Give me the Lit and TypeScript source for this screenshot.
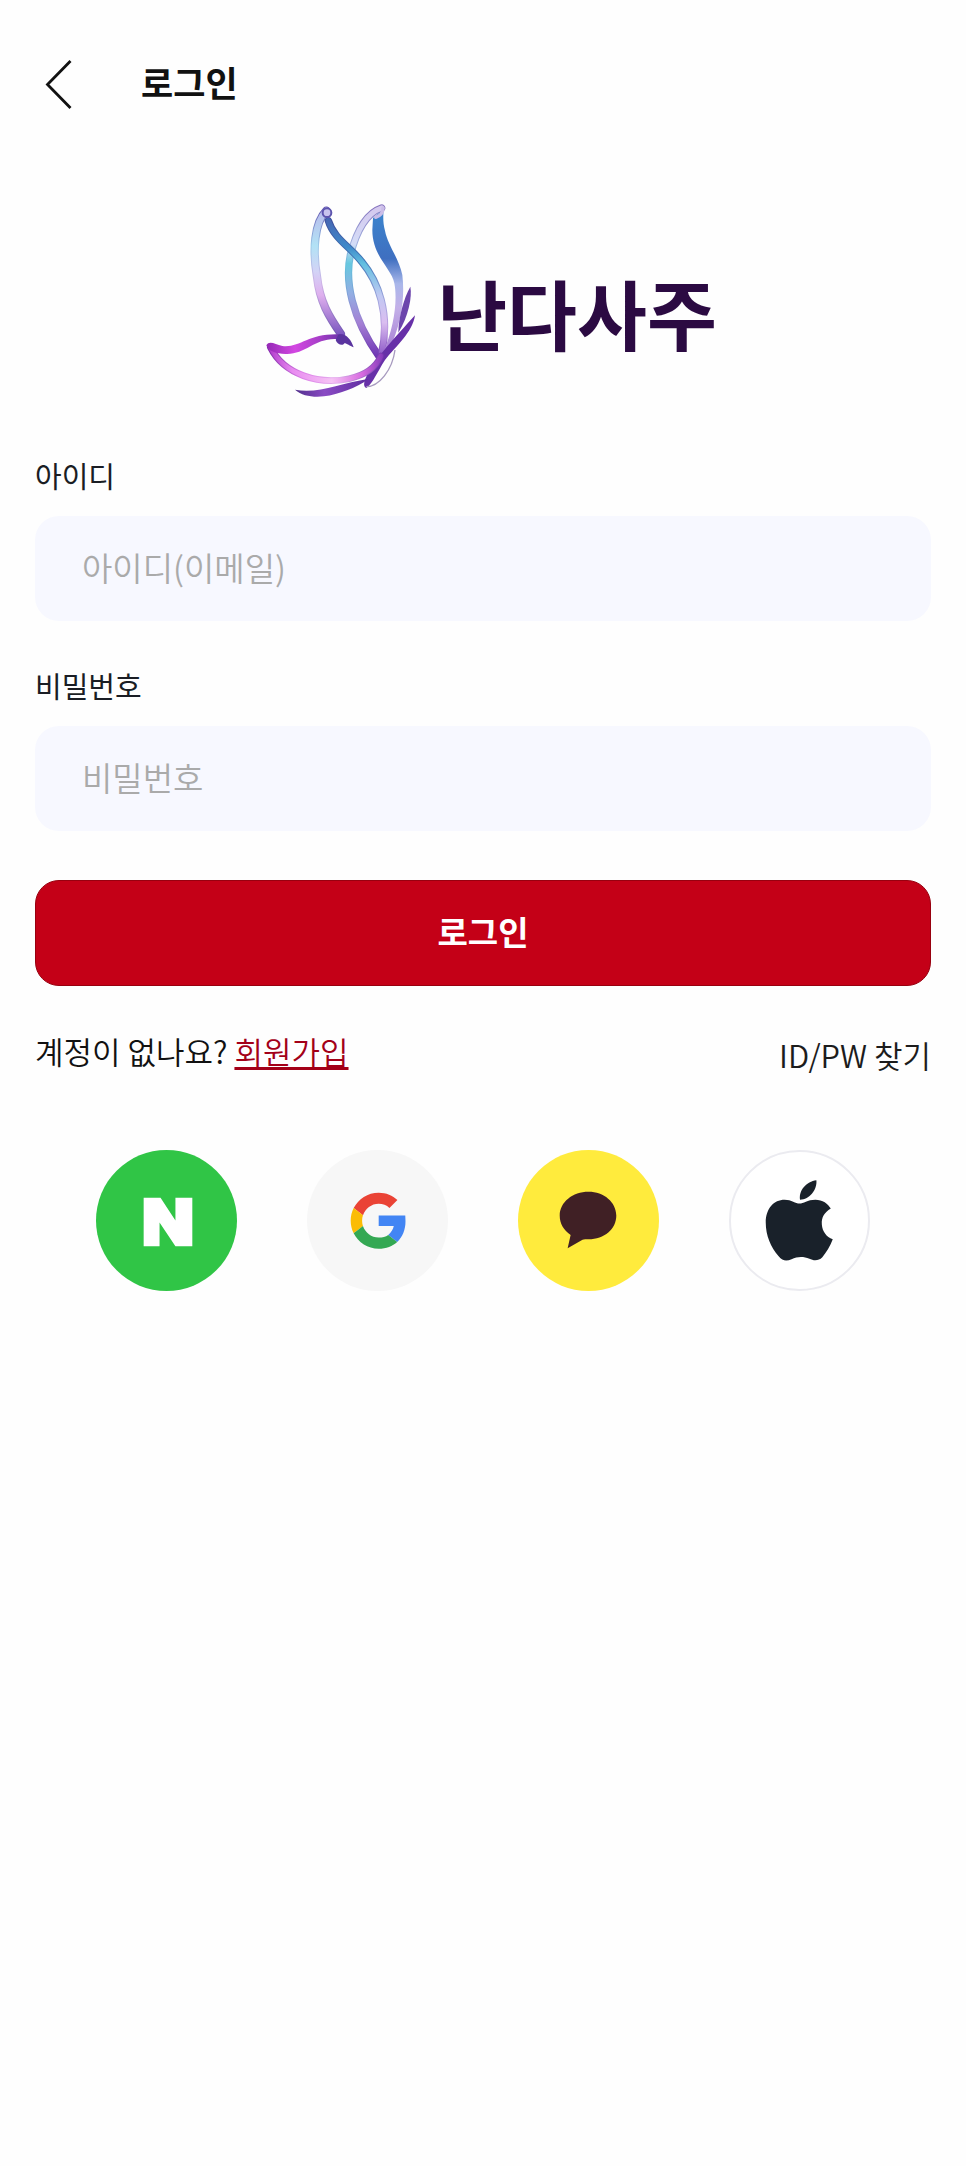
import { LitElement, html, css, svg } from "lit";
import { customElement } from "lit/decorators.js";

/* One ribbon of the butterfly: a darker edge with a lighter core on top. */
const ribbon = (d: string, paint: string, edge: string, width: number) => svg`
  <path d=${d} fill="none" stroke="url(#${edge})" stroke-width=${width} stroke-linecap="round"></path>
  <path d=${d} fill="none" stroke="url(#${paint})" stroke-width=${width - 6} stroke-linecap="round"></path>
`;

@customElement("brand-logo")
export class BrandLogo extends LitElement {
  static styles = css`
    :host {
      display: flex;
      justify-content: center;
      align-items: center;
      gap: 8px;
    }
    .mark {
      width: 180px;
      height: 220px;
      flex: none;
    }
    .name {
      padding-top: 24px;
      font-size: 76px;
      line-height: 88px;
      font-weight: 700;
      color: #2b0a42;
      white-space: nowrap;
    }
  `;

  render() {
    return html`
      <svg class="mark" viewBox="0 0 540 660" aria-hidden="true">
        <defs>
          <linearGradient id="wing" gradientUnits="userSpaceOnUse" x1="0" y1="50" x2="0" y2="440">
            <stop offset="0" stop-color="#b9b6ea"></stop>
            <stop offset="0.3" stop-color="#b2e2f5"></stop>
            <stop offset="0.5" stop-color="#d3d3f6"></stop>
            <stop offset="0.68" stop-color="#dfb0ee"></stop>
            <stop offset="1" stop-color="#7651bd"></stop>
          </linearGradient>
          <linearGradient id="wingEdge" gradientUnits="userSpaceOnUse" x1="0" y1="50" x2="0" y2="440">
            <stop offset="0" stop-color="#5f4fae"></stop>
            <stop offset="0.3" stop-color="#9ccbe9"></stop>
            <stop offset="0.6" stop-color="#cfb1e6"></stop>
            <stop offset="1" stop-color="#6a50ae"></stop>
          </linearGradient>
          <linearGradient id="vein" gradientUnits="userSpaceOnUse" x1="0" y1="90" x2="0" y2="500">
            <stop offset="0" stop-color="#4668b4"></stop>
            <stop offset="0.2" stop-color="#3f8bca"></stop>
            <stop offset="0.32" stop-color="#62bfe0"></stop>
            <stop offset="0.55" stop-color="#c0c9f2"></stop>
            <stop offset="0.75" stop-color="#dabdf0"></stop>
            <stop offset="1" stop-color="#8a55c6"></stop>
          </linearGradient>
          <linearGradient id="veinEdge" gradientUnits="userSpaceOnUse" x1="0" y1="90" x2="0" y2="500">
            <stop offset="0" stop-color="#3c4f9b"></stop>
            <stop offset="0.3" stop-color="#3f78b8"></stop>
            <stop offset="0.6" stop-color="#a3a6de"></stop>
            <stop offset="0.8" stop-color="#bd9ae0"></stop>
            <stop offset="1" stop-color="#6d3ab0"></stop>
          </linearGradient>
          <linearGradient id="inner" gradientUnits="userSpaceOnUse" x1="0" y1="50" x2="0" y2="500">
            <stop offset="0" stop-color="#d5c8ee"></stop>
            <stop offset="0.25" stop-color="#d3dcf7"></stop>
            <stop offset="0.38" stop-color="#66c8df"></stop>
            <stop offset="0.58" stop-color="#93aee3"></stop>
            <stop offset="0.78" stop-color="#a47fd4"></stop>
            <stop offset="1" stop-color="#6f35b4"></stop>
          </linearGradient>
          <linearGradient id="innerEdge" gradientUnits="userSpaceOnUse" x1="0" y1="50" x2="0" y2="500">
            <stop offset="0" stop-color="#8573bd"></stop>
            <stop offset="0.25" stop-color="#9fb0df"></stop>
            <stop offset="0.4" stop-color="#62bfdc"></stop>
            <stop offset="0.75" stop-color="#9a86d2"></stop>
            <stop offset="1" stop-color="#6830aa"></stop>
          </linearGradient>
          <linearGradient id="right" gradientUnits="userSpaceOnUse" x1="0" y1="80" x2="0" y2="500">
            <stop offset="0" stop-color="#3b82cc"></stop>
            <stop offset="0.3" stop-color="#3f6fc0"></stop>
            <stop offset="0.48" stop-color="#a9b7ea"></stop>
            <stop offset="0.65" stop-color="#c3b0e8"></stop>
            <stop offset="1" stop-color="#a579d2"></stop>
          </linearGradient>
          <linearGradient id="lower" gradientUnits="userSpaceOnUse" x1="50" y1="0" x2="410" y2="0">
            <stop offset="0" stop-color="#a92fc6"></stop>
            <stop offset="0.22" stop-color="#e88af0"></stop>
            <stop offset="0.55" stop-color="#f6c4f5"></stop>
            <stop offset="0.8" stop-color="#d86be0"></stop>
            <stop offset="1" stop-color="#7a35b5"></stop>
          </linearGradient>
          <linearGradient id="lowerEdge" gradientUnits="userSpaceOnUse" x1="50" y1="0" x2="410" y2="0">
            <stop offset="0" stop-color="#7b26a6"></stop>
            <stop offset="0.3" stop-color="#dd80e8"></stop>
            <stop offset="0.6" stop-color="#e6b2ee"></stop>
            <stop offset="1" stop-color="#6b2da8"></stop>
          </linearGradient>
          <linearGradient id="crest" gradientUnits="userSpaceOnUse" x1="50" y1="0" x2="300" y2="0">
            <stop offset="0" stop-color="#9228b4"></stop>
            <stop offset="0.35" stop-color="#d347e2"></stop>
            <stop offset="0.65" stop-color="#a63ec7"></stop>
            <stop offset="1" stop-color="#53309c"></stop>
          </linearGradient>
          <linearGradient id="tail" gradientUnits="userSpaceOnUse" x1="130" y1="0" x2="370" y2="0">
            <stop offset="0" stop-color="#4b2c86"></stop>
            <stop offset="0.4" stop-color="#8a4bc4"></stop>
            <stop offset="1" stop-color="#5a2a9c"></stop>
          </linearGradient>
        </defs>
        ${ribbon("M398 54C350 70 322 125 304 195C288 270 305 380 392 502", "inner", "innerEdge", 22)}
        ${ribbon("M232 62C196 98 190 180 204 260C212 335 240 380 276 432", "wing", "wingEdge", 25)}
        ${ribbon("M238 92C254 145 305 172 338 215C388 275 424 370 398 490", "vein", "veinEdge", 22)}
        <path d="M372 84C380 76 392 70 404 58C402 80 402 100 408 122C416 165 450 205 460 255C468 320 458 400 420 482L402 490C436 410 446 330 436 280C428 235 370 200 370 120Z" fill="url(#right)"></path>
        <path d="M380 82C392 78 402 68 402 54" fill="none" stroke="#cbbde8" stroke-width="10" stroke-linecap="round"></path>
        <circle cx="234" cy="68" r="13" fill="#c8c3ee" stroke="#5d54ae" stroke-width="6"></circle>
        <path d="M484 290C490 320 478 380 448 428C448 385 464 325 484 290Z" fill="#6c45ac"></path>
        <path d="M498 376C492 425 440 470 408 510C385 545 372 580 352 594C340 590 346 570 356 552C375 510 440 440 498 376Z" fill="#6730a8"></path>
        <path d="M438 480C430 540 390 590 352 590" fill="none" stroke="#a79abf" stroke-width="4"></path>
        ${ribbon("M64 472C105 555 210 585 300 566C350 555 382 530 396 498", "lower", "lowerEdge", 20)}
        <path d="M52 466C60 450 78 462 100 468C155 475 180 425 285 434L270 448C200 440 170 495 110 492C80 490 60 486 52 466Z" fill="url(#crest)"></path>
        <path d="M268 434C290 428 306 448 314 472C302 468 294 460 286 460C280 470 264 462 260 450Z" fill="#5a349f"></path>
        <path d="M138 599C210 612 270 580 360 566C320 595 270 612 225 619C190 622 160 618 138 599Z" fill="url(#tail)"></path>
      </svg>
      <span class="name">난다사주</span>
    `;
  }
}

@customElement("app-root")
export class AppRoot extends LitElement {
  static styles = css`
    :host {
      display: block;
      min-height: 100vh;
      box-sizing: border-box;
      background: #fefefe;
      color: #111;
      font-family: "Noto Sans CJK KR", "Noto Sans", sans-serif;
    }
    * {
      box-sizing: border-box;
    }
    .bar {
      display: flex;
      align-items: flex-start;
      gap: 68px;
      padding: 56px 44px 0;
    }
    .back {
      display: flex;
      width: 29px;
      height: 56px;
      padding: 0;
      border: 0;
      background: none;
      align-items: center;
    }
    .title {
      margin: 0;
      font-size: 35px;
      line-height: 52px;
      font-weight: 700;
    }
    .content {
      padding: 78px 35px 0;
    }
    .form {
      display: flex;
      flex-direction: column;
      margin-top: 45px;
    }
    .label {
      font-size: 29px;
      line-height: 40px;
      color: #1a1d24;
    }
    .field {
      width: 100%;
      height: 105px;
      margin: 21px 0 44px;
      padding: 0 47px 4px;
      border: 0;
      border-radius: 24px;
      background: #f7f8ff;
      color: #111;
      font: 350 33px/48px "Noto Sans CJK KR", sans-serif;
    }
    .field::placeholder {
      color: #aaa;
      opacity: 1;
    }
    .submit {
      height: 106px;
      margin-top: 5px;
      padding: 0 0 5px;
      border: 1px solid #98000f;
      border-radius: 24px;
      background: #c40017;
      color: #fff;
      font: 700 33px/48px "Noto Sans CJK KR", sans-serif;
    }
    .links {
      display: flex;
      justify-content: space-between;
      align-items: flex-start;
      margin-top: 43px;
      font-size: 31px;
      font-weight: 350;
    }
    .prompt {
      margin: 0;
      line-height: 44px;
    }
    .join {
      color: #a30018;
      text-decoration: underline;
      text-decoration-thickness: 3px;
      text-underline-offset: 3px;
    }
    .find {
      color: #1c1c1c;
      line-height: 52px;
      text-decoration: none;
    }
    .social {
      display: flex;
      justify-content: space-between;
      margin-top: 69px;
      padding: 0 61px;
    }
    .provider {
      width: 141px;
      height: 141px;
      padding: 0;
      border: 0;
      border-radius: 50%;
      background: none;
    }
    .provider svg {
      display: block;
      width: 100%;
      height: 100%;
    }
    .naver {
      background: #30c546;
    }
    .google {
      background: #f7f7f7;
    }
    .kakao {
      background: #ffeb3d;
    }
    .apple {
      border: 2px solid #ebebf0;
      background: #fff;
    }
  `;

  render() {
    return html`
      <header class="bar">
        <button class="back" type="button" aria-label="뒤로">
          <svg width="29" height="50" viewBox="0 0 29 50" fill="none" stroke="#111" stroke-width="2.8">
            <path d="M26.5 2L3.5 25.500L26.5 49"></path>
          </svg>
        </button>
        <h1 class="title">로그인</h1>
      </header>
      <main class="content">
        <brand-logo></brand-logo>
        <form class="form">
          <label class="label" for="user">아이디</label>
          <input class="field" id="user" type="email" placeholder="아이디(이메일)" />
          <label class="label" for="password">비밀번호</label>
          <input class="field" id="password" type="password" placeholder="비밀번호" />
          <button class="submit" type="button">로그인</button>
        </form>
        <div class="links">
          <p class="prompt">계정이 없나요? <a class="join" href="#join">회원가입</a></p>
          <a class="find" href="#find">ID/PW 찾기</a>
        </div>
        <div class="social">
          <button class="provider naver" type="button" aria-label="네이버 로그인">
            <svg viewBox="0 0 142 142">
              <path d="M48 48H65L80 71V48H97V97H80L64 73V97H48Z" fill="#fff"></path>
            </svg>
          </button>
          <button class="provider google" type="button" aria-label="구글 로그인">
            <svg viewBox="0 0 142 142">
              <g transform="translate(44 43) scale(1.175)">
                <path fill="#ea4335" d="M24 9.5c3.54 0 6.71 1.22 9.21 3.6l6.85-6.85C35.9 2.38 30.47 0 24 0 14.62 0 6.51 5.38 2.56 13.22l7.98 6.19C12.43 13.72 17.74 9.5 24 9.5z"></path>
                <path fill="#4285f4" d="M46.98 24.55c0-1.57-.15-3.09-.2-4.950H24v9.02h12.94c-.58 2.96-2.26 5.48-4.78 7.58l7.73 6c4.51-4.18 7.09-10.36 7.09-17.65z"></path>
                <path fill="#fbbc05" d="M10.53 28.59c-.48-1.45-.76-2.99-.76-4.59s.27-3.14.76-4.59l-7.98-6.19C.92 16.46 0 20.12 0 24c0 3.88.92 7.54 2.56 10.78l7.97-6.19z"></path>
                <path fill="#34a853" d="M24 48c6.48 0 11.93-2.13 15.89-5.81l-7.73-6c-2.15 1.45-4.92 2.3-8.16 2.3-6.26 0-11.57-4.22-13.47-9.91l-7.98 6.19C6.51 42.62 14.62 48 24 48z"></path>
              </g>
            </svg>
          </button>
          <button class="provider kakao" type="button" aria-label="카카오 로그인">
            <svg viewBox="0 0 142 142">
              <path d="M71 42C86.500 42 99 52.500 99 66C99 79.500 87 90 71 90C68.500 90 66.500 90 65 90.500L50 99L53 85.500C46 81 42 74 42 66C42 52.500 55 42 71 42Z" fill="#402025"></path>
            </svg>
          </button>
          <button class="provider apple" type="button" aria-label="애플 로그인">
            <svg viewBox="2 2 138 138">
              <path d="M88 30.500C89 40 81 50 71.500 50C70 41 78 31.500 88 30.500Z" fill="#19212a"></path>
              <path d="M71 54C75 54 79 50 87 50C94 50 100 54 102.500 59C96 63 93 68 93.500 75C94 82 98 87.500 104.500 90C102 97 98 103 94 108C90 112 85 111.500 81 109.500C75 107 69 107 63 110C58 112 54 112 50 107C42 98 37 86 37 73C37 59 45 50 56 50C63 50 67 54 71 54Z" fill="#19212a"></path>
            </svg>
          </button>
        </div>
      </main>
    `;
  }
}
